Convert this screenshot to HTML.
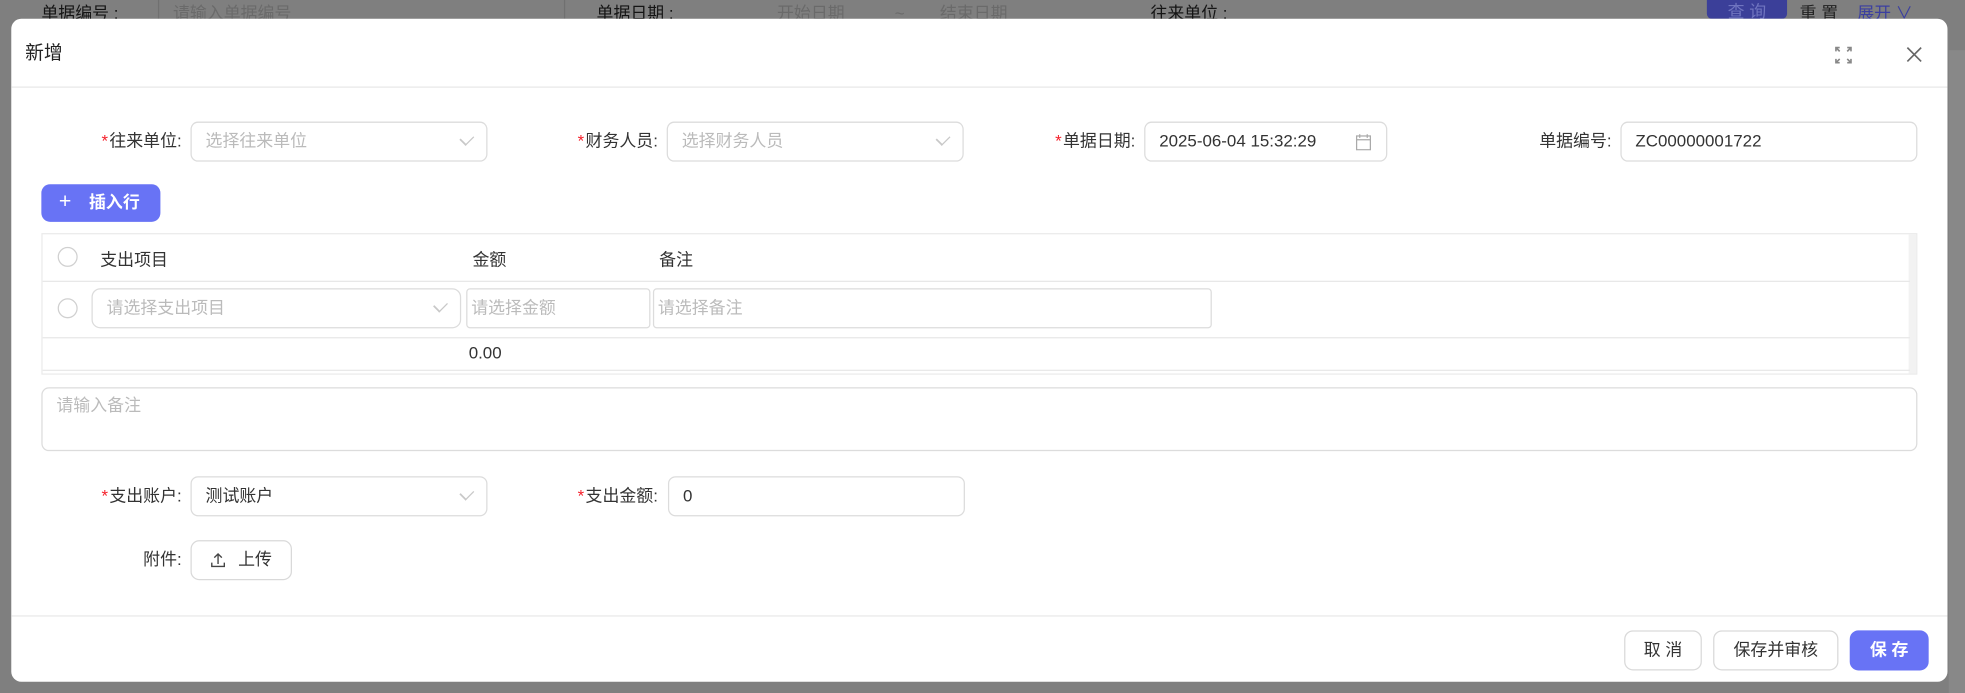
<!DOCTYPE html>
<html><head><meta charset="utf-8"><style>
*{box-sizing:border-box;margin:0;padding:0}
html,body{width:1965px;height:693px;overflow:hidden;background:#7f7f7f}
body{font-family:"Liberation Sans","Noto Sans CJK SC",sans-serif;}
#w{position:absolute;left:0;top:0;width:1568px;height:553px;transform:scale(1.2532);transform-origin:0 0;font-size:13.5px;color:#333}
.a{position:absolute}
.bgt{color:#151515;font-size:13.5px;top:0;line-height:18px}
.modal{left:9px;top:15px;width:1545px;height:529px;background:#fff;border-radius:8px;overflow:hidden}
.inp{position:absolute;height:32px;border:1px solid #dcdcdc;border-radius:6px;background:#fff;line-height:30px;padding-left:11px;color:#bbb;font-size:13.5px}
.inp.v{color:#333}
.lbl{position:absolute;line-height:32px;text-align:right;color:#333}
.req{color:#f5222d;margin-right:1px}
.arr{position:absolute;right:12px;top:9px;width:7px;height:7px;border-right:1px solid #c8c8c8;border-bottom:1px solid #c8c8c8;transform:rotate(45deg) scaleY(1.4)}
.btn{position:absolute;height:32px;border:1px solid #d9d9d9;border-radius:7px;background:#fff;text-align:center;line-height:30px;color:#333}
.cb{position:absolute;width:16px;height:16px;border:1px solid #d0d0d0;border-radius:50%}
</style></head><body><div id="w">
<div class="a bgt" style="left:33px;top:2px">单据编号 :</div>
<div class="a" style="left:126px;top:0;width:1px;height:15px;background:#707070"></div>
<div class="a bgt" style="left:138px;top:2px;color:#6a6a6a">请输入单据编号</div>
<div class="a" style="left:450px;top:0;width:1px;height:15px;background:#707070"></div>
<div class="a bgt" style="left:476px;top:2px">单据日期 :</div>
<div class="a bgt" style="left:620px;top:2px;color:#6a6a6a">开始日期</div>
<div class="a bgt" style="left:714px;top:2px;color:#6a6a6a">~</div>
<div class="a bgt" style="left:750px;top:2px;color:#6a6a6a">结束日期</div>
<div class="a bgt" style="left:918px;top:2px">往来单位 :</div>
<div class="a" style="left:1362px;top:0;width:64px;height:15px;background:#3b3f99;border-radius:0 0 4px 4px;color:#7075c0;text-align:center;font-size:13.5px;line-height:20px">查 询</div>
<div class="a bgt" style="left:1436px;top:2px;color:#222">重 置</div>
<div class="a bgt" style="left:1482px;top:2px;color:#3b3fa0">展开 ∨</div>
<div class="a" style="left:1555px;top:40px;width:13px;height:513px;background:#888"></div>

<div class="a modal">
 <div class="a" style="left:11px;top:16px;font-size:15px;color:#222">新增</div>
 <svg class="a" style="left:1455px;top:22px" width="14" height="14" viewBox="0 0 14 14" fill="none" stroke="#888" stroke-width="1.3"><path d="M1 4V1h3M1 1l3 3M13 4V1h-3M13 1l-3 3M1 10v3h3M1 13l3-3M13 10v3h-3M13 13l-3-3"/></svg>
 <svg class="a" style="left:1512px;top:22px" width="13" height="13" viewBox="0 0 13 13" stroke="#666" stroke-width="1.3"><path d="M1 1l11 11M12 1L1 12"/></svg>
 <div class="a" style="left:0;top:54px;width:1545px;height:1px;background:#e8e8e8"></div>

 <div class="lbl" style="left:40px;top:82px;width:96px"><span class="req">*</span>往来单位:</div>
 <div class="inp" style="left:143px;top:82px;width:237px">选择往来单位<i class="arr"></i></div>
 <div class="lbl" style="left:420px;top:82px;width:96px"><span class="req">*</span>财务人员:</div>
 <div class="inp" style="left:523px;top:82px;width:237px">选择财务人员<i class="arr"></i></div>
 <div class="lbl" style="left:800px;top:82px;width:97px"><span class="req">*</span>单据日期:</div>
 <div class="inp v" style="left:904px;top:82px;width:194px">2025-06-04 15:32:29
  <svg class="a" style="right:12px;top:9px" width="12" height="13" viewBox="0 0 12 13" fill="none" stroke="#aaa"><rect x="0.5" y="1.5" width="11" height="11"/><path d="M0.5 4.5h11M3 0v3M9 0v3"/></svg></div>
 <div class="lbl" style="left:1180px;top:82px;width:97px">单据编号:</div>
 <div class="inp v" style="left:1284px;top:82px;width:237px">ZC00000001722</div>

 <div class="a" style="left:24px;top:132px;width:95px;height:30px;background:#6873f5;border-radius:7px;color:#fff;line-height:30px;font-weight:bold;font-size:13.5px"><span style="font-weight:normal;font-size:17px;position:absolute;left:14px;top:-1px">+</span><span style="position:absolute;left:38px">插入行</span></div>

 <div class="a" style="left:24px;top:171px;width:1497px;height:113px;border:1px solid #ebebeb">
  <div class="a" style="right:0;top:0;width:6px;height:111px;background:#f2f2f2"></div>
  <div class="a" style="left:0;top:37px;width:1490px;height:1px;background:#e8e8e8"></div>
  <div class="a" style="left:0;top:82px;width:1490px;height:1px;background:#e8e8e8"></div>
  <div class="a" style="left:0;top:108px;width:1490px;height:1px;background:#e8e8e8"></div>
  <div class="cb" style="left:12px;top:10px"></div>
  <div class="a" style="left:46px;top:9px">支出项目</div>
  <div class="a" style="left:343px;top:9px">金额</div>
  <div class="a" style="left:492px;top:9px">备注</div>
  <div class="cb" style="left:12px;top:51px"></div>
  <div class="inp" style="left:39px;top:43px;width:295px;height:32px;border-radius:7px">请选择支出项目<i class="arr"></i></div>
  <div class="inp" style="left:338px;top:43px;width:147px;height:32px;border-radius:3px;padding-left:3px">请选择金额</div>
  <div class="inp" style="left:487px;top:43px;width:446px;height:32px;border-radius:3px;padding-left:3px">请选择备注</div>
  <div class="a" style="left:340px;top:87px">0.00</div>
 </div>

 <div class="inp" style="left:24px;top:294px;width:1497px;height:51px;line-height:20px;padding-top:4px">请输入备注</div>

 <div class="lbl" style="left:40px;top:365px;width:96px"><span class="req">*</span>支出账户:</div>
 <div class="inp v" style="left:143px;top:365px;width:237px">测试账户<i class="arr"></i></div>
 <div class="lbl" style="left:420px;top:365px;width:96px"><span class="req">*</span>支出金额:</div>
 <div class="inp v" style="left:524px;top:365px;width:237px">0</div>
 <div class="lbl" style="left:40px;top:416px;width:96px">附件:</div>
 <div class="btn" style="left:143px;top:416px;width:81px">
  <svg class="a" style="left:15px;top:9px" width="12" height="12" viewBox="0 0 12 12" fill="none" stroke="#444" stroke-width="1.1"><path d="M6 9V1M3 4l3-3 3 3M1 8v3h10V8"/></svg><span style="margin-left:22px">上传</span></div>

 <div class="a" style="left:0;top:476px;width:1545px;height:1px;background:#e8e8e8"></div>
 <div class="btn" style="left:1287px;top:488px;width:62px">取 消</div>
 <div class="btn" style="left:1358px;top:488px;width:100px">保存并审核</div>
 <div class="btn" style="left:1467px;top:488px;width:63px;background:#6873f5;border-color:#6873f5;color:#fff;font-weight:bold">保 存</div>
</div>
</div></body></html>
